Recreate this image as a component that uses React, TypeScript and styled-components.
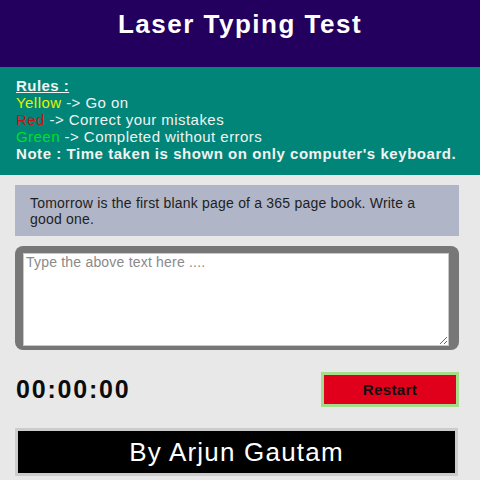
import React from "react";
import styled, { createGlobalStyle } from "styled-components";

const Global = createGlobalStyle`
  html, body { margin: 0; padding: 0; background: #e8e8e8; }
  body { font-family: "Liberation Sans", Arial, sans-serif; }
  * { box-sizing: border-box; }
`;

const Page = styled.div`
  width: 480px;
  min-height: 480px;
  background: #e8e8e8;
`;

const Header = styled.header`
  height: 67px;
  background: #23005e;
  padding-top: 9px;
`;

const Title = styled.h1`
  margin: 0;
  text-align: center;
  color: #ffffff;
  font-size: 26px;
  line-height: 30px;
  letter-spacing: 1.5px;
  font-weight: 700;
`;

const Rules = styled.section`
  height: 108px;
  background: #008578;
  padding: 10px 16px 0;
  color: #f2f2f2;
  font-size: 15px;
  line-height: 17px;
  letter-spacing: 0.45px;
`;

const RuleLine = styled.div<{ $bold?: boolean }>`
  font-weight: ${(p) => (p.$bold ? 700 : 400)};
  letter-spacing: ${(p) => (p.$bold ? "0.55px" : "0.45px")};
  white-space: nowrap;
`;

const RulesHead = styled.span`
  font-weight: 700;
  text-decoration: underline;
`;

const Tag = styled.span<{ $c: string }>`
  color: ${(p) => p.$c};
`;

const Main = styled.main`
  padding: 10px 21px 4px 15px;
  display: flex;
  flex-direction: column;
`;

const Quote = styled.div`
  background: #b0b5c7;
  color: #1e1e1e;
  font-size: 14px;
  line-height: 16px;
  letter-spacing: 0.2px;
  padding: 10px 24px 10px 15px;
  height: 51px;
`;

const InputFrame = styled.div`
  margin-top: 10px;
  background: #777777;
  border-radius: 8px;
  padding: 7px 10px 4px 8px;
  height: 104px;
  display: flex;
`;

const Input = styled.textarea`
  flex: 1;
  border: 1px solid #c8c8c8;
  background: #ffffff;
  font-family: "Liberation Sans", Arial, sans-serif;
  font-size: 14px;
  letter-spacing: 0.2px;
  padding: 0 2px;
  resize: both;
  outline: none;
  &::placeholder { color: #8a8a8a; }
`;

const Controls = styled.div`
  margin-top: 22px;
  display: flex;
  align-items: center;
  justify-content: space-between;
`;

const Timer = styled.div`
  font-size: 25px;
  font-weight: 700;
  letter-spacing: 1.8px;
  color: #0c0c0c;
  padding-left: 1px;
`;

const RestartButton = styled.button`
  width: 138px;
  height: 35px;
  background: #e0001b;
  border: 3px solid #a4de8a;
  color: #111;
  font-family: "Liberation Sans", Arial, sans-serif;
  font-weight: 700;
  font-size: 15px;
  letter-spacing: 0.4px;
  cursor: pointer;
`;

const Footer = styled.footer`
  margin-top: 21px;
  width: 443px;
  height: 48px;
  background: #000;
  border: 3px solid #cccccc;
  color: #fff;
  font-size: 26px;
  letter-spacing: 1.2px;
  display: flex;
  align-items: center;
  justify-content: center;
`;

export default function App() {
  return (
    <Page>
      <Global />
      <Header>
        <Title>Laser Typing Test</Title>
      </Header>
      <Rules>
        <RuleLine>
          <RulesHead>Rules :</RulesHead>
        </RuleLine>
        <RuleLine>
          <Tag $c="#e4f000">Yellow</Tag> -&gt; Go on
        </RuleLine>
        <RuleLine>
          <Tag $c="#c81414">Red</Tag> -&gt; Correct your mistakes
        </RuleLine>
        <RuleLine>
          <Tag $c="#00e020">Green</Tag> -&gt; Completed without errors
        </RuleLine>
        <RuleLine $bold>Note : Time taken is shown on only computer's keyboard.</RuleLine>
      </Rules>
      <Main>
        <Quote>Tomorrow is the first blank page of a 365 page book. Write a good one.</Quote>
        <InputFrame>
          <Input placeholder="Type the above text here ...." />
        </InputFrame>
        <Controls>
          <Timer>00:00:00</Timer>
          <RestartButton>Restart</RestartButton>
        </Controls>
        <Footer>By Arjun Gautam</Footer>
      </Main>
    </Page>
  );
}
